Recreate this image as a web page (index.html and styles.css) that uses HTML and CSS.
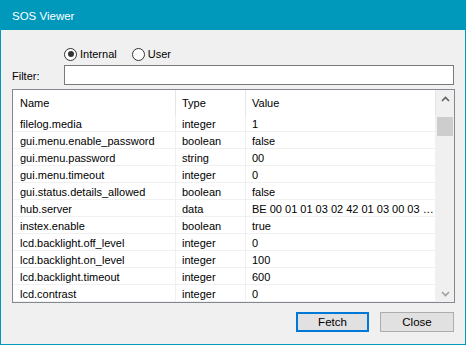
FILE: index.html
```html
<!DOCTYPE html>
<html lang="en">
  <head>
    <meta charset="UTF-8" />
    <meta name="viewport" content="width=device-width, initial-scale=1.0" />
    <title>SOS Viewer</title>
    <link rel="stylesheet" href="styles.css">
  </head>
  <body>
    <div class="window">
      <div class="titlebar">SOS Viewer</div>

      <div class="radios">
        <label class="radio"><span class="dot checked"></span>Internal</label>
        <label class="radio"><span class="dot"></span>User</label>
      </div>

      <div class="filter">
        <span class="filter-label">Filter:</span>
        <div class="filter-input"></div>
      </div>

      <div class="list">
        <div class="list-body">
          <div class="row head">
            <div class="cell">Name</div>
            <div class="cell">Type</div>
            <div class="cell">Value</div>
          </div>
          <div class="row"><div class="cell">filelog.media</div><div class="cell">integer</div><div class="cell">1</div></div>
          <div class="row"><div class="cell">gui.menu.enable_password</div><div class="cell">boolean</div><div class="cell">false</div></div>
          <div class="row"><div class="cell">gui.menu.password</div><div class="cell">string</div><div class="cell">00</div></div>
          <div class="row"><div class="cell">gui.menu.timeout</div><div class="cell">integer</div><div class="cell">0</div></div>
          <div class="row"><div class="cell">gui.status.details_allowed</div><div class="cell">boolean</div><div class="cell">false</div></div>
          <div class="row"><div class="cell">hub.server</div><div class="cell">data</div><div class="cell">BE 00 01 01 03 02 42 01 03 00 03 …</div></div>
          <div class="row"><div class="cell">instex.enable</div><div class="cell">boolean</div><div class="cell">true</div></div>
          <div class="row"><div class="cell">lcd.backlight.off_level</div><div class="cell">integer</div><div class="cell">0</div></div>
          <div class="row"><div class="cell">lcd.backlight.on_level</div><div class="cell">integer</div><div class="cell">100</div></div>
          <div class="row"><div class="cell">lcd.backlight.timeout</div><div class="cell">integer</div><div class="cell">600</div></div>
          <div class="row"><div class="cell">lcd.contrast</div><div class="cell">integer</div><div class="cell">0</div></div>
        </div>
        <div class="scrollbar">
          <div class="arrow">
            <svg width="9" height="6" viewBox="0 0 9 6"><path d="M1 5 L4.5 1.5 L8 5" fill="none" stroke="#606060" stroke-width="1.6"/></svg>
          </div>
          <div class="track"><div class="thumb"></div></div>
          <div class="arrow">
            <svg width="9" height="6" viewBox="0 0 9 6"><path d="M1 1 L4.5 4.5 L8 1" fill="none" stroke="#a0a0a0" stroke-width="1.6"/></svg>
          </div>
        </div>
      </div>

      <div class="buttons">
        <button class="btn default">Fetch</button>
        <button class="btn">Close</button>
      </div>
    </div>
  </body>
</html>
```

FILE: styles.css
```css
html,
body {
  margin: 0;
  padding: 0;
}
body {
  font: normal 11px "Liberation Sans", Arial, sans-serif;
  color: #000;
  background: #f0f0f0;
}

.window {
  width: 466px;
  height: 345px;
  box-sizing: border-box;
  border: 1px solid #0099bc;
  border-top: 0;
  background: #f0f0f0;
  display: flex;
  flex-direction: column;
}

/* Title */
.titlebar {
  height: 30px;
  margin: 0 -1px;
  padding-left: 12px;
  background: #0099bc;
  color: #fff;
  font-size: 11.5px;
  line-height: 33px;
}

/* Radios */
.radios {
  display: flex;
  gap: 15px;
  height: 16px;
  margin: 16px 0 0 63px;
}
.radio {
  display: flex;
  align-items: center;
  gap: 3px;
}
.dot {
  width: 11px;
  height: 11px;
  border: 1px solid #333;
  border-radius: 50%;
  background: #fff;
  position: relative;
}
.dot.checked::after {
  content: "";
  position: absolute;
  left: 2.5px;
  top: 2.5px;
  width: 6px;
  height: 6px;
  border-radius: 50%;
  background: #333;
}

/* Filter */
.filter {
  display: flex;
  align-items: center;
  height: 20px;
  margin-top: 3px;
  padding-left: 11px;
}
.filter-label {
  width: 52px;
  padding-top: 1px;
}
.filter-input {
  width: 390px;
  height: 20px;
  box-sizing: border-box;
  border: 1px solid #7a7a7a;
  background: #fff;
}

/* List */
.list {
  display: flex;
  width: 443px;
  height: 214px;
  box-sizing: border-box;
  margin: 4px 0 0 11px;
  border: 1px solid #828790;
  background: #fff;
  overflow: hidden;
}
.list-body {
  flex: 1;
}
.row {
  display: grid;
  grid-template-columns: 163px 70px 190px;
  height: 17px;
  line-height: 18px;
  box-sizing: border-box;
  border-bottom: 1px solid #f0f0f0;
}
.row .cell {
  padding-left: 6px;
  border-right: 1px solid #f0f0f0;
  white-space: nowrap;
  overflow: hidden;
}
.row .cell:first-child {
  padding-left: 7px;
}
.row.head {
  height: 25px;
  line-height: 26px;
  border-bottom: 0;
}
.row.head .cell {
  border-right-color: #e5e5e5;
}

/* Scrollbar */
.scrollbar {
  width: 18px;
  display: flex;
  flex-direction: column;
  background: #f0f0f0;
}
.arrow {
  height: 17px;
  display: flex;
  align-items: center;
  justify-content: center;
}
.track {
  flex: 1;
  padding: 10px 1px 0;
}
.thumb {
  height: 19px;
  background: #cdcdcd;
}

/* Buttons */
.buttons {
  display: flex;
  justify-content: flex-end;
  gap: 11px;
  margin: 9px 11px 0 0;
}
.btn {
  width: 74px;
  height: 20px;
  box-sizing: border-box;
  border: 1px solid #adadad;
  background: #e1e1e1;
  font: inherit;
  font-size: 11.5px;
  padding: 0;
}
.btn.default {
  width: 73px;
  border: 2px solid #0078d7;
}
```
